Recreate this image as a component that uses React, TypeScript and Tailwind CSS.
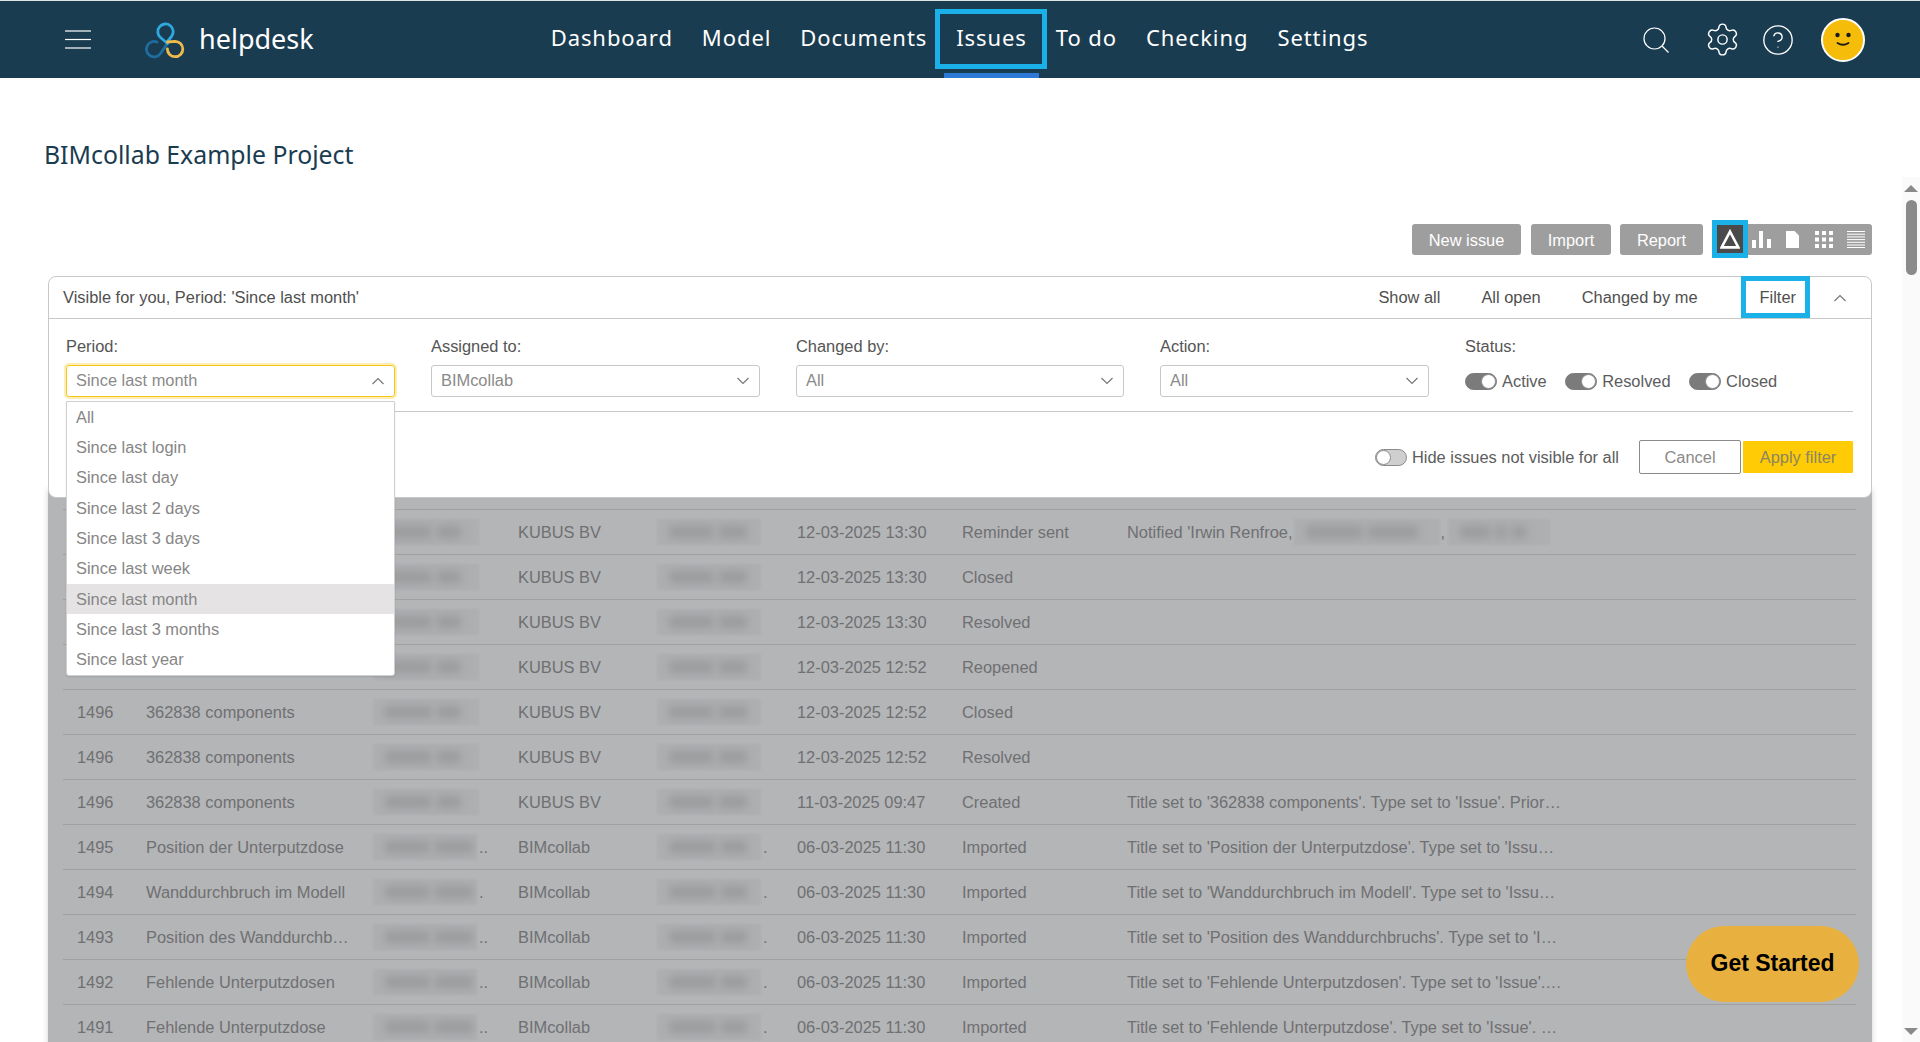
import React from "react";
import { Settings, CircleHelp } from "lucide-react";

type Row = { id: string; title: string; co: string; date: string; action: string; note?: string; dots1?: string; dots2?: string };

const k = "KUBUS BV";
const b = "BIMcollab";
const rows: Row[] = [
  { id: "", title: "", co: k, date: "12-03-2025 13:30", action: "Reminder sent", note: "Notified 'Irwin Renfroe," },
  { id: "", title: "", co: k, date: "12-03-2025 13:30", action: "Closed" },
  { id: "", title: "", co: k, date: "12-03-2025 13:30", action: "Resolved" },
  { id: "", title: "", co: k, date: "12-03-2025 12:52", action: "Reopened" },
  { id: "1496", title: "362838 components", co: k, date: "12-03-2025 12:52", action: "Closed" },
  { id: "1496", title: "362838 components", co: k, date: "12-03-2025 12:52", action: "Resolved" },
  { id: "1496", title: "362838 components", co: k, date: "11-03-2025 09:47", action: "Created", note: "Title set to '362838 components'. Type set to 'Issue'. Prior…" },
  { id: "1495", title: "Position der Unterputzdose", co: b, date: "06-03-2025 11:30", action: "Imported", note: "Title set to 'Position der Unterputzdose'. Type set to 'Issu…", dots1: "..", dots2: "." },
  { id: "1494", title: "Wanddurchbruch im Modell", co: b, date: "06-03-2025 11:30", action: "Imported", note: "Title set to 'Wanddurchbruch im Modell'. Type set to 'Issu…", dots1: ".", dots2: "." },
  { id: "1493", title: "Position des Wanddurchb…", co: b, date: "06-03-2025 11:30", action: "Imported", note: "Title set to 'Position des Wanddurchbruchs'. Type set to 'I…", dots1: "..", dots2: "." },
  { id: "1492", title: "Fehlende Unterputzdosen", co: b, date: "06-03-2025 11:30", action: "Imported", note: "Title set to 'Fehlende Unterputzdosen'. Type set to 'Issue'.…", dots1: "..", dots2: "." },
  { id: "1491", title: "Fehlende Unterputzdose", co: b, date: "06-03-2025 11:30", action: "Imported", note: "Title set to 'Fehlende Unterputzdose'. Type set to 'Issue'. …", dots1: "..", dots2: "." },
];

const periods = ["All", "Since last login", "Since last day", "Since last 2 days", "Since last 3 days", "Since last week", "Since last month", "Since last 3 months", "Since last year"];

function Chevron({ up = false }: { up?: boolean }) {
  return (
    <svg width="14" height="8" viewBox="0 0 14 8" fill="none" stroke="#777" strokeWidth="1.2" className="shrink-0">
      <polyline points={up ? "1.5,7 7,1.5 12.5,7" : "1.5,1 7,6.5 12.5,1"} />
    </svg>
  );
}

function Select({ label, value, width, open, children }: { label: string; value: string; width: string; open?: boolean; children?: React.ReactNode }) {
  return (
    <div className={`relative ${width}`}>
      <div className="h-5 mb-[9px] leading-5 text-[#555]">{label}</div>
      <div
        className={`h-8 rounded-[3px] border flex items-center justify-between pl-[9px] pr-[9px] text-[#8a8a8a] ${
          open ? "border-[#f5c518] shadow-[0_0_0_2px_#fdeeb5]" : "border-[#c8c8c8]"
        }`}
      >
        <span className="pb-[2px]">{value}</span>
        <Chevron up={open} />
      </div>
      {children}
    </div>
  );
}

function Toggle({ on, label }: { on: boolean; label: string }) {
  return (
    <div className="flex items-center gap-[5px]">
      <span
        className={`w-[32px] h-[17px] rounded-full border flex items-center ${
          on ? "bg-[#7b7b7b] border-[#7b7b7b] justify-end" : "bg-[#cfcfcf] border-[#8a8a8a] justify-start"
        }`}
      >
        <span className="w-[15px] h-[15px] rounded-full bg-white border border-[#8a8a8a]" />
      </span>
      <span className="text-[#5c5c5c]">{label}</span>
    </div>
  );
}

function Blur({ w, bars = [40, 28] }: { w: string; bars?: number[] }) {
  return (
    <span className={`h-[26px] ${w} bg-[#aeafb1] flex items-center gap-[6px] px-[12px] overflow-hidden shrink-0 blur-[1px]`}>
      {bars.map((n, i) => (
        <span key={i} style={{ width: n }} className="h-[12px] bg-[#9a9b9d] blur-[4px] shrink-0" />
      ))}
    </span>
  );
}

function TableRow({ r, first }: { r: Row; first: boolean }) {
  const wide = !!r.dots1;
  return (
    <div className="h-[45px] border-t border-[#a0a1a3] flex items-center text-[#6f7072] whitespace-nowrap">
      <span className="w-[83px] pl-[14px] shrink-0">{r.id}</span>
      <span className="w-[227px] shrink-0">{r.title}</span>
      <span className="w-[145px] shrink-0 flex items-center">
        <Blur w={wide ? "w-[104px]" : "w-[106px]"} bars={wide ? [44, 38] : [46, 24]} />
        {r.dots1 && <span className="ml-[2px]">{r.dots1}</span>}
      </span>
      <span className="w-[139px] shrink-0">{r.co}</span>
      <span className="w-[140px] shrink-0 flex items-center">
        <Blur w="w-[104px]" bars={wide ? [46, 26] : [44, 28]} />
        {r.dots2 && <span className="ml-[2px]">{r.dots2}</span>}
      </span>
      <span className="w-[165px] shrink-0">{r.date}</span>
      <span className="w-[165px] shrink-0">{r.action}</span>
      <span className="flex items-center">
        {r.note}
        {first && (
          <>
            <span className="ml-[2px]"><Blur w="w-[146px]" bars={[56, 50]} /></span>
            <span>,</span>
            <span className="ml-[3px]"><Blur w="w-[102px]" bars={[30, 10, 14]} /></span>
          </>
        )}
      </span>
    </div>
  );
}

function Logo() {
  return (
    <svg width="42" height="40" viewBox="8 0 42 40" fill="none" strokeWidth="2.8" strokeLinecap="round" className="shrink-0">
      <path d="M21 22 A7.7 7.7 0 1 0 24.5 33.5 L31 24" stroke="#1e6d9e" />
      <path d="M31.5 23.5 L24.5 17.5 A7.7 7.7 0 1 1 35.5 16.5 L31 22" stroke="#2fa8e0" />
      <path d="M31.5 22 L39 21.3 A7.7 7.7 0 1 1 31.4 29" stroke="#eebb4a" />
    </svg>
  );
}

export default function App() {
  return (
    <div className="relative w-full h-[1042px] overflow-hidden bg-white font-[Liberation_Sans,Arial,sans-serif] text-[16.42px]">
      <header className="h-[78px] border-t border-[#dfe2e3] bg-[#1a3c50] flex items-center text-white font-[Noto_Sans,sans-serif]">
        <svg width="26" height="19" viewBox="0 0 26 19" stroke="#fff" strokeWidth="1.2" className="ml-[65px] shrink-0">
          <line x1="0" y1="1" x2="26" y2="1" />
          <line x1="0" y1="9.5" x2="26" y2="9.5" />
          <line x1="0" y1="18" x2="26" y2="18" />
        </svg>
        <span className="ml-[53px]"><Logo /></span>
        <span className="ml-[13px] text-[27px] leading-none pb-[2px]">helpdesk</span>
        <nav className="ml-[237px] flex items-center h-full gap-[29px] text-[22px] tracking-[0.92px]">
          {["Dashboard", "Model", "Documents", "Issues", "To do", "Checking", "Settings"].map((n) => (
            <span key={n} className="relative flex items-center h-full pb-[4px]">
              {n}
              {n === "Issues" && (
                <>
                  <span className="absolute left-[-21px] right-[-20px] top-[8px] h-[60px] border-[5px] border-[#1ab0e8]" />
                  <span className="absolute left-[-12px] right-[-12px] bottom-0 h-[5px] bg-[#2d7ad6]" />
                </>
              )}
            </span>
          ))}
        </nav>
        <div className="ml-auto mr-[55px] flex items-center">
          <svg width="26" height="26" viewBox="0 0 26 26" fill="none" stroke="#fff" strokeWidth="1.2" className="shrink-0">
            <circle cx="11.5" cy="11.5" r="10.5" />
            <line x1="19" y1="19" x2="25.5" y2="25.5" />
          </svg>
          <Settings size={37} strokeWidth={0.95} className="ml-[35px] shrink-0" />
          <CircleHelp size={34} strokeWidth={0.95} className="ml-[20px] shrink-0" />
          <span className="ml-[26px] w-[44px] h-[44px] rounded-full bg-[#f5bd0a] border-2 border-white flex items-center justify-center shrink-0">
            <svg width="24" height="18" viewBox="0 0 24 18" fill="none">
              <circle cx="6.5" cy="4" r="2.2" fill="#1a1a1a" />
              <circle cx="17.5" cy="4" r="2.2" fill="#1a1a1a" />
              <path d="M6.5 12 Q12 15.5 17.5 12" stroke="#1a1a1a" strokeWidth="1.8" strokeLinecap="round" />
            </svg>
          </span>
        </div>
      </header>

      <main className="pl-[44px] pr-[48px]">
        <h1 className="pt-[59px] h-[108px] leading-[34px] text-[24.8px] font-normal text-[#1a3c50] font-[Noto_Sans,sans-serif]">
          BIMcollab Example Project
        </h1>

        <div className="mt-[38px] h-[31px] flex justify-end text-white">
          <span className="w-[109px] pt-[1px] rounded-[3px] bg-[#9e9e9e] flex items-center justify-center">New issue</span>
          <span className="ml-[10px] w-[80px] pt-[1px] rounded-[3px] bg-[#9e9e9e] flex items-center justify-center">Import</span>
          <span className="ml-[9px] w-[83px] pt-[1px] rounded-[3px] bg-[#9e9e9e] flex items-center justify-center">Report</span>
          <div className="relative ml-[9px] w-[160px] rounded-[3px] bg-[#9e9e9e] flex items-center">
            <span className="absolute left-0 top-[-4px] w-[36px] h-[38px] border-[5px] border-[#1ab0e8] bg-[#4a4a4a] flex items-center justify-center">
              <svg width="20" height="20" viewBox="0 0 20 20" fill="none" stroke="#fff" strokeWidth="2.6" strokeLinejoin="miter">
                <path d="M10 2.6 L18.4 18.4 H1.6 Z" />
              </svg>
            </span>
            <svg width="19" height="17" viewBox="0 0 19 17" fill="#fff" className="ml-[40px] shrink-0">
              <rect x="0" y="9" width="4" height="8" />
              <rect x="7" y="0" width="4" height="17" />
              <rect x="15" y="8" width="4" height="9" />
            </svg>
            <svg width="13" height="17" viewBox="0 0 13 17" fill="#fff" className="ml-[15px] shrink-0">
              <path d="M0 0 H8.5 L13 4.5 V17 H0 Z" />
            </svg>
            <svg width="18" height="17" viewBox="0 0 18 17" fill="#fff" className="ml-[16px] shrink-0">
              {[0, 6.5, 13].map((y) =>
                [0, 7, 14].map((x) => <rect key={`${x}-${y}`} x={x} y={y} width="4" height="4" />)
              )}
            </svg>
            <svg width="18" height="17" viewBox="0 0 18 17" fill="#fff" className="ml-[14px] shrink-0">
              {[0, 2.7, 5.4, 8.1, 10.8, 13.5, 16].map((y) => (
                <rect key={y} x="0" y={y} width="18" height="1" />
              ))}
            </svg>
          </div>
        </div>

        <section className="relative z-10 mt-[21px] ml-[4px] bg-white border border-[#c8c8c8] rounded-[8px]">
          <div className="relative h-[42px] border-b border-[#c8c8c8] flex items-center pl-[14px] pr-[24px] text-[#4f4f4f]">
            <span>Visible for you, Period: 'Since last month'</span>
            <div className="ml-auto flex items-center">
              <span>Show all</span>
              <span className="ml-[41px]">All open</span>
              <span className="ml-[41px]">Changed by me</span>
              <span className="relative ml-[62px]">
                Filter
                <span className="absolute left-[-19px] right-[-14px] top-[-9px] h-[42px] border-[5px] border-[#1ab0e8]" />
              </span>
              <span className="ml-[37px] flex"><Chevron up /></span>
            </div>
          </div>
          <div className="pt-[17px] pl-[17px] pr-[18px] pb-[23px]">
            <div className="flex">
              <Select label="Period:" value="Since last month" width="w-[329px]" open>
                <div className="absolute left-0 right-0 top-[65px] z-20 bg-white border border-[#d0d0d0] rounded-b-[3px] text-[#868686] shadow-[0_1px_2px_rgba(0,0,0,0.1)]">
                  {periods.map((p) => (
                    <div key={p} className={`h-[30.3px] flex items-center pl-[9px] ${p === "Since last month" ? "bg-[#e5e3e4]" : ""}`}>
                      {p}
                    </div>
                  ))}
                </div>
              </Select>
              <div className="ml-[36px]"><Select label="Assigned to:" value="BIMcollab" width="w-[329px]" /></div>
              <div className="ml-[36px]"><Select label="Changed by:" value="All" width="w-[328px]" /></div>
              <div className="ml-[36px]"><Select label="Action:" value="All" width="w-[269px]" /></div>
              <div className="ml-[36px]">
                <div className="h-5 mb-[9px] leading-5 text-[#555]">Status:</div>
                <div className="flex items-center h-[32px] gap-[18.5px]">
                  <Toggle on label="Active" />
                  <Toggle on label="Resolved" />
                  <Toggle on label="Closed" />
                </div>
              </div>
            </div>
            <div className="mt-[14px] border-t border-[#c8c8c8]" />
            <div className="mt-[28px] flex items-center justify-end h-[34px]">
              <Toggle on={false} label="Hide issues not visible for all" />
              <span className="ml-[20px] w-[102px] h-[34px] border border-[#8a8a8a] rounded-[2px] flex items-center justify-center text-[#8a8a8a]">Cancel</span>
              <span className="ml-[2px] w-[110px] h-[32px] bg-[#ffcb05] rounded-[1px] flex items-center justify-center text-[#8c8560]">Apply filter</span>
            </div>
          </div>
        </section>

        <section className="-mt-[9px] ml-[4px] pt-[20px] pl-[15px] pr-[16px] h-[560px] bg-[#b4b5b7] shadow-[0_0_6px_rgba(0,0,0,0.18)]">
          {rows.map((r, i) => (
            <TableRow key={i} r={r} first={i === 0} />
          ))}
        </section>
      </main>

      <button className="absolute left-[1686px] top-[926px] w-[173px] h-[76px] pb-[2px] rounded-[38px] bg-[#e8b13f] text-black font-bold text-[23px] z-20">
        Get Started
      </button>

      <div className="absolute right-0 top-[177px] bottom-0 w-[18px] bg-[#fafafa] flex flex-col items-center">
        <span className="mt-[8px] w-0 h-0 border-x-[7px] border-x-transparent border-b-[7px] border-b-[#8a8a8a]" />
        <span className="mt-[8px] w-[11px] h-[75px] rounded-full bg-[#8a8a8a]" />
        <span className="mt-auto mb-[7px] w-0 h-0 border-x-[7px] border-x-transparent border-t-[7px] border-t-[#8a8a8a]" />
      </div>
    </div>
  );
}
